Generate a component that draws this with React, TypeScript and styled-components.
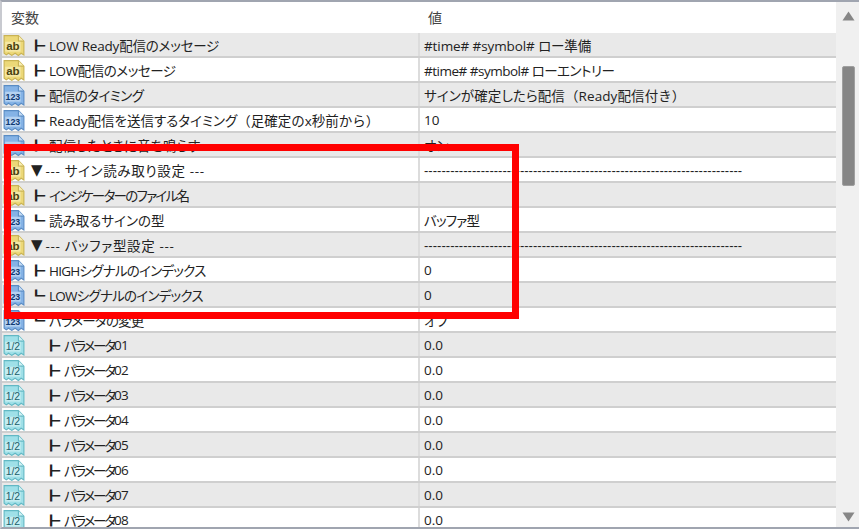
import { createGlobalStyle, styled } from "styled-components";

const GlobalStyle = createGlobalStyle`
  html, body {
    margin: 0;
    padding: 0;
    background: #fff;
    overflow: hidden;
  }
`;

const Window = styled.div`
  position: relative;
  width: 859px;
  height: 529px;
  box-sizing: border-box;
  display: flex;
  overflow: hidden;
  background: #fff;
  border-top: 2px solid #a0a5b0;
  border-left: 2px solid #c8cad0;
  border-bottom: 2px solid #a0a5b0;
  font-family: "Open Sans", "Noto Sans CJK JP", sans-serif;
  font-size: 13.5px;
  font-feature-settings: "palt";
  color: #222;
`;
const Table = styled.div`
  width: 834px;
  flex: none;
  overflow: hidden;
`;
const Header = styled.div`
  display: grid;
  grid-template-columns: 417px 1fr;
  height: 31px;
  align-items: center;
  color: #444;
`;
const HeadCell = styled.div`
  padding-left: 9px;
  padding-bottom: 1px;
  font-size: 14px;
`;
const Row = styled.div<{ $odd: boolean }>`
  display: grid;
  grid-template-columns: 418px 1fr;
  grid-template-rows: 23px;
  height: 25px;
  box-sizing: border-box;
  border-bottom: 2px solid #cfcfcf;
  background: ${(p) => (p.$odd ? "#e9e9e9" : "#fff")};
`;
const NameCell = styled.div<{ $track: number }>`
  display: flex;
  align-items: center;
  box-sizing: border-box;
  height: 23px;
  white-space: nowrap;
  padding-top: 1px;
  border-right: 2px solid #dcdcdc;
  letter-spacing: ${(p) => p.$track}px;
`;
const ValueCell = styled.div<{ $track: number; $rule: boolean }>`
  display: flex;
  align-items: center;
  box-sizing: border-box;
  height: 23px;
  padding-left: 4px;
  padding-top: 1px;
  white-space: nowrap;
  letter-spacing: ${(p) => p.$track}px;
  font-family: ${(p) =>
    p.$rule ? `"Liberation Sans", sans-serif` : "inherit"};
  font-size: ${(p) => (p.$rule ? 13 : 13.5)}px;
`;
const WideParen = styled.span`
  font-feature-settings: normal;
  white-space: pre;
`;
const Digits = styled.span`
  letter-spacing: -0.7px;
`;
const Icon = styled.svg`
  width: 22px;
  height: 24px;
  flex: none;
  align-self: flex-start;
  margin: 0 8px 0 1px;
  letter-spacing: 0;
`;
const Branch = styled.span<{ $level: number }>`
  display: inline-block;
  width: 16px;
  flex: none;
  margin-left: ${(p) => (p.$level - 1) * 15}px;
  font-family: "Noto Sans CJK JP", sans-serif;
  font-feature-settings: normal;
  font-size: 14px;
  font-weight: 900;
  letter-spacing: 0;
  color: #222;
  transform: translateX(-3.5px) scale(1.3, 0.84);
`;
const Arrow = styled.span`
  margin-left: -2px;
  font-family: "DejaVu Sans", sans-serif;
  font-size: 15px;
  letter-spacing: 0;
  margin-right: 3px;
`;
const Scrollbar = styled.div`
  flex: 1;
  display: flex;
  flex-direction: column;
  align-items: center;
  background-color: #f0f0f0;
  padding-left: 1px;
`;
const ScrollArrow = styled.svg<{ $top?: number; $bottom?: number }>`
  width: 13px;
  height: 10px;
  flex: none;
  margin-top: ${(p) => p.$top ?? 0}px;
  margin-bottom: ${(p) => p.$bottom ?? 0}px;
`;
const Thumb = styled.div`
  width: 13px;
  height: 120px;
  margin-top: 45px;
  box-sizing: border-box;
  background: #868686;
  border: 1px solid #a0a0a0;
  border-radius: 2px;
`;
const Spacer = styled.div`
  flex: 1;
`;
const Highlight = styled.div`
  position: absolute;
  left: 2px;
  top: 142px;
  width: 515px;
  height: 175px;
  box-sizing: border-box;
  border: 7px solid #ff0000;
  pointer-events: none;
`;

type Kind = "ab" | "123" | "half";

const palette = {
  ab: { fill: "#ecd878", edge: "#c9b354", ink: "#4a4310", box: "#f8eeb4" },
  "123": { fill: "#85b3e6", edge: "#5a8cc4", ink: "#0f3a72", box: "#c6dcf4" },
  half: { fill: "#9fe0e8", edge: "#62b8c4", ink: "#1a5f6a", box: "#d2f1f4" },
};

function TypeIcon({ kind }: { kind: Kind }) {
  const c = palette[kind];
  const label = kind === "half" ? "1/2" : kind;
  return (
    <Icon viewBox="1 1 20 21.8">
      <path
        d="M2 2.5H15L20 7.5V20L17.5 18.5L15 20.5L12 18.5L9 20.5L6 18.5L4 20L2 18.5Z"
        fill={c.fill}
        stroke={c.edge}
        strokeWidth="1"
      />
      <path d="M15 2.5V7.5H20" fill={c.box} stroke={c.edge} strokeWidth="1" />
      <rect x="3" y="8" width="14" height="9" fill={c.box} opacity="0.75" />
      <text
        x="10"
        y="15.5"
        textAnchor="middle"
        fontFamily="Liberation Sans, sans-serif"
        fontSize={kind === "ab" ? 10.5 : kind === "half" ? 9.5 : 8}
        fontWeight={kind === "half" ? 400 : 700}
        fill={c.ink}
      >
        {label}
      </text>
    </Icon>
  );
}

const dashes = "-".repeat(73);

const rows: {
  kind: Kind;
  level: number;
  mark: string;
  name: string;
  note?: string;
  digits?: string;
  track: number;
  value: string;
  valueNote?: string;
  valueTrack?: number;
}[] = [
  { kind: "ab", level: 1, mark: "┣", name: "LOW Ready配信のメッセージ", track: -0.2, value: "#time# #symbol# ロー準備", valueTrack: -0.1 },
  { kind: "ab", level: 1, mark: "┣", name: "LOW配信のメッセージ", track: -0.45, value: "#time# #symbol# ローエントリー", valueTrack: -0.5 },
  { kind: "123", level: 1, mark: "┣", name: "配信のタイミング", track: -0.6, value: "サインが確定したら配信", valueNote: "（Ready配信付き）", valueTrack: 0.1 },
  { kind: "123", level: 1, mark: "┣", name: "Ready配信を送信するタイミング", note: "（足確定のx秒前から）", track: 0, value: "10" },
  { kind: "123", level: 1, mark: "┣", name: "配信したときに音を鳴らす", track: 0, value: "オン" },
  { kind: "ab", level: 0, mark: "▼", name: "--- サイン読み取り設定 ---", track: 0.65, value: dashes, valueTrack: 0.03 },
  { kind: "ab", level: 1, mark: "┣", name: "インジケーターのファイル名", track: -1.7, value: "" },
  { kind: "123", level: 1, mark: "┗", name: "読み取るサインの型", track: 0, value: "バッファ型", valueTrack: -0.8 },
  { kind: "ab", level: 0, mark: "▼", name: "--- バッファ型設定 ---", track: 0.65, value: dashes, valueTrack: 0.03 },
  { kind: "123", level: 1, mark: "┣", name: "HIGHシグナルのインデックス", track: -0.75, value: "0" },
  { kind: "123", level: 1, mark: "┗", name: "LOWシグナルのインデックス", track: -0.75, value: "0" },
  { kind: "123", level: 1, mark: "┗", name: "パラメータの変更", track: -0.8, value: "オフ" },
  ...[1, 2, 3, 4, 5, 6, 7, 8].map((n) => ({
    kind: "half" as Kind,
    level: 2,
    mark: "┣",
    name: "パラメータ",
    digits: `0${n}`,
    track: -2.2,
    value: "0.0",
  })),
];

export default function App() {
  return (
    <>
      <GlobalStyle />
      <Window>
        <Table>
          <Header>
            <HeadCell>変数</HeadCell>
            <HeadCell>値</HeadCell>
          </Header>
          {rows.map((row, i) => (
            <Row key={row.name + (row.digits ?? "")} $odd={i % 2 === 0}>
              <NameCell $track={row.track}>
                <TypeIcon kind={row.kind} />
                {row.level === 0 ? (
                  <Arrow>{row.mark}</Arrow>
                ) : (
                  <Branch $level={row.level}>{row.mark}</Branch>
                )}
                {row.name}
                {row.digits && <Digits>{row.digits}</Digits>}
                {row.note && <WideParen>{row.note}</WideParen>}
              </NameCell>
              <ValueCell $track={row.valueTrack ?? 0} $rule={row.value === dashes}>
                {row.value}
                {row.valueNote && <WideParen>{row.valueNote}</WideParen>}
              </ValueCell>
            </Row>
          ))}
        </Table>
        <Scrollbar>
          <ScrollArrow viewBox="0 0 13 10" $top={9}>
            <path d="M6.5 0.5L12.5 9.5H0.5Z" fill="#868686" />
          </ScrollArrow>
          <Thumb />
          <Spacer />
          <ScrollArrow viewBox="0 0 13 10" $bottom={5}>
            <path d="M0.5 0.5H12.5L6.5 9.5Z" fill="#868686" />
          </ScrollArrow>
        </Scrollbar>
        <Highlight />
      </Window>
    </>
  );
}
